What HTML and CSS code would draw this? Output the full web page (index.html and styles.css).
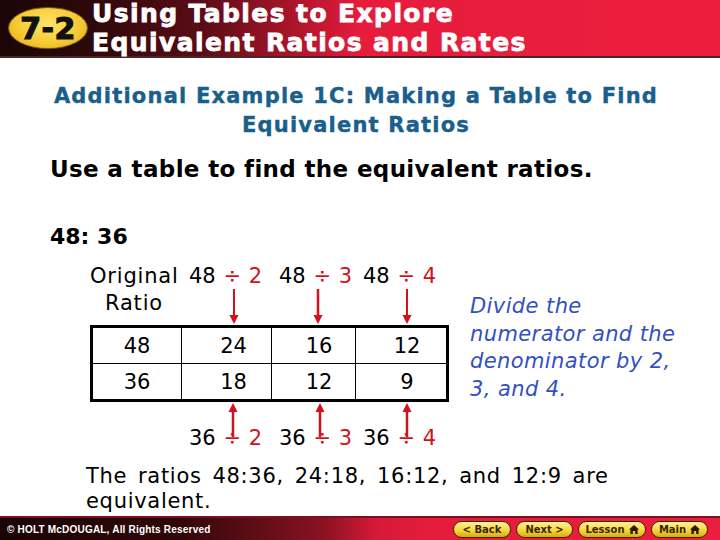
FILE: index.html
```html
<!DOCTYPE html>
<html>
<head>
<meta charset="utf-8">
<link rel="stylesheet" href="styles.css">
</head>
<body>
<div class="slide">
  <header class="header">
    <div class="badge"><span>7-2</span></div>
    <div class="title">
      <div>Using Tables to Explore</div>
      <div>Equivalent Ratios and Rates</div>
    </div>
  </header>

  <main class="content">
    <h1 class="example">Additional Example 1C: Making a Table to Find<br>Equivalent Ratios</h1>
    <p class="task">Use a table to find the equivalent ratios.</p>
    <p class="ratio">48: 36</p>

    <div class="work">
      <div class="diagram">
        <div class="toprow">
          <div class="orig">Original<br><span class="ratio-word">Ratio</span></div>
          <div class="op c2"><span class="n">48</span> <span class="r">÷ 2</span>
            <svg class="arr down" width="10" height="36" viewBox="0 0 10 36"><line x1="5" y1="0" x2="5" y2="28" stroke="#d4101c" stroke-width="2"/><path d="M0.5 26 L5 35 L9.5 26 Z" fill="#d4101c"/></svg>
          </div>
          <div class="op c3"><span class="n">48</span> <span class="r">÷ 3</span>
            <svg class="arr down" width="10" height="36" viewBox="0 0 10 36"><line x1="5" y1="0" x2="5" y2="28" stroke="#d4101c" stroke-width="2.5"/><path d="M0.5 26 L5 35 L9.5 26 Z" fill="#d4101c"/></svg>
          </div>
          <div class="op c4"><span class="n">48</span> <span class="r">÷ 4</span>
            <svg class="arr down" width="10" height="36" viewBox="0 0 10 36"><line x1="5" y1="0" x2="5" y2="28" stroke="#d4101c" stroke-width="2"/><path d="M0.5 26 L5 35 L9.5 26 Z" fill="#d4101c"/></svg>
          </div>
        </div>

        <table class="tbl">
          <tr><td>48</td><td>24</td><td>16</td><td>12</td></tr>
          <tr><td>36</td><td>18</td><td>12</td><td>9</td></tr>
        </table>

        <div class="botrow">
          <div class="orig"></div>
          <div class="op c2">
            <svg class="arr up" width="10" height="34" viewBox="0 0 10 34"><path d="M0.5 9 L5 0 L9.5 9 Z" fill="#d4101c"/><line x1="5" y1="7" x2="5" y2="34" stroke="#d4101c" stroke-width="2.5"/></svg>
            <span class="n">36</span> <span class="r">÷ 2</span></div>
          <div class="op c3">
            <svg class="arr up" width="10" height="34" viewBox="0 0 10 34"><path d="M0.5 9 L5 0 L9.5 9 Z" fill="#d4101c"/><line x1="5" y1="7" x2="5" y2="34" stroke="#d4101c" stroke-width="2.5"/></svg>
            <span class="n">36</span> <span class="r">÷ 3</span></div>
          <div class="op c4">
            <svg class="arr up" width="10" height="34" viewBox="0 0 10 34"><path d="M0.5 9 L5 0 L9.5 9 Z" fill="#d4101c"/><line x1="5" y1="7" x2="5" y2="34" stroke="#d4101c" stroke-width="2.5"/></svg>
            <span class="n">36</span> <span class="r">÷ 4</span></div>
        </div>
      </div>
      <p class="note">Divide the<br>numerator and the<br>denominator by 2,<br>3, and 4.</p>
    </div>

    <p class="conclusion">The ratios 48:36, 24:18, 16:12, and 12:9 are equivalent.</p>
  </main>

  <footer class="footer">
    <span class="copy">© HOLT McDOUGAL, All Rights Reserved</span>
    <nav class="nav">
      <span class="btn b-back">&lt; Back</span>
      <span class="btn b-next">Next &gt;</span>
      <span class="btn b-lesson">Lesson <svg class="home" width="10" height="9" viewBox="0 0 10 9"><path d="M5 0 L10 4.5 L8.6 4.5 L8.6 9 L6.2 9 L6.2 6 L3.8 6 L3.8 9 L1.4 9 L1.4 4.5 L0 4.5 Z" fill="#2a1800"/></svg></span>
      <span class="btn b-main">Main <svg class="home" width="10" height="9" viewBox="0 0 10 9"><path d="M5 0 L10 4.5 L8.6 4.5 L8.6 9 L6.2 9 L6.2 6 L3.8 6 L3.8 9 L1.4 9 L1.4 4.5 L0 4.5 Z" fill="#2a1800"/></svg></span>
    </nav>
  </footer>
</div>
</body>
</html>
```

FILE: styles.css
```css
* { box-sizing: border-box; }
html, body { margin: 0; padding: 0; background: #fff; }
.slide {
  width: 720px;
  height: 540px;
  display: flex;
  flex-direction: column;
  font-family: "DejaVu Sans", Verdana, sans-serif;
  color: #000;
  overflow: hidden;
}
.header {
  height: 58px;
  flex: none;
  display: flex;
  align-items: center;
  background: linear-gradient(90deg, #1c0505 0%, #2c0809 12%, #5a0c16 28%, #b3162c 42%, #e61c3c 50%, #ec1e3e 100%);
  border-bottom: 2px solid #4a2528;
}
.badge {
  width: 80px;
  height: 42px;
  margin-left: 8px;
  margin-right: 4px;
  border-radius: 50%;
  background: radial-gradient(ellipse at 50% 40%, #ffe46a 0%, #f5c830 60%, #d9a415 100%);
  border: 1px solid #7a5a10;
  display: flex;
  align-items: center;
  justify-content: center;
}
.badge span {
  font-family: "DejaVu Sans", Arial, sans-serif;
  font-weight: bold;
  font-size: 30px;
  color: #111;
  -webkit-text-stroke: 1.2px #111;
  letter-spacing: 0.5px;
}
.title {
  font-family: "DejaVu Sans", Arial, sans-serif;
  font-weight: bold;
  font-size: 25px;
  line-height: 29px;
  color: #fff;
  -webkit-text-stroke: 0.8px #fff;
  letter-spacing: 1.4px;
  margin-top: -1px;
  white-space: nowrap;
}
.content {
  flex: 1;
  padding: 0 0 0 50px;
}
.example {
  margin: 24px 0 0 -50px;
  width: 712px;
  text-align: center;
  font-size: 21px;
  line-height: 29px;
  letter-spacing: 1.2px;
  font-weight: bold;
  color: #1a5f8c;
  -webkit-text-stroke: 0.4px #1a5f8c;
}
.task {
  margin: 15px 0 0 0;
  font-size: 23px;
  line-height: 28px;
  letter-spacing: 0.35px;
  font-weight: bold;
}
.ratio {
  margin: 41px 0 0 0;
  font-size: 22px;
  line-height: 26px;
  font-weight: bold;
}
.work {
  display: flex;
  align-items: flex-start;
  margin-top: 13px;
  margin-left: 40px;
}
.diagram {
  width: 356px;
  flex: none;
}
.toprow, .botrow {
  display: grid;
  grid-template-columns: 90px 90px 84px 92px;
  font-size: 21px;
  line-height: 26px;
}
.toprow .orig { line-height: 27px; letter-spacing: 0.8px; white-space: nowrap; }
.ratio-word { margin-left: 15px; }
.op { padding-left: 9px; white-space: nowrap; word-spacing: 1px; }
.r { color: #d4101c; }
.arr { display: block; }
.c2 .arr { margin-left: 40px; }
.c3 .arr { margin-left: 34px; }
.c4 .arr { margin-left: 39px; }
.botrow .c2 .arr { margin-left: 39px; }
.botrow .c3 .arr { margin-left: 36px; }
.botrow .c4 .arr { margin-left: 39px; }
.botrow .arr { margin-top: 1px; margin-bottom: -12px; }
.tbl {
  width: 356px;
  border-collapse: collapse;
  border: 3px solid #000;
  font-size: 21px;
  table-layout: fixed;
}
.tbl td {
  border: 1px solid #000;
  height: 37px;
  text-align: center;
  padding: 0;
}
.tbl td:nth-child(1) { width: 90px; }
.tbl td:nth-child(2) { width: 90px; padding-left: 14px; }
.tbl td:nth-child(3) { width: 84px; padding-left: 11px; }
.tbl td:nth-child(4) { width: 92px; padding-left: 12px; }
.note {
  margin: 30px 0 0 24px;
  font-size: 21px;
  line-height: 27.5px;
  letter-spacing: 0.4px;
  font-style: italic;
  color: #3350c0;
  white-space: nowrap;
}
.conclusion {
  margin: 13px 0 0 36px;
  width: 580px;
  font-size: 21px;
  line-height: 25px;
  letter-spacing: 0.7px;
  word-spacing: 3.5px;
}
.footer {
  height: 24px;
  flex: none;
  display: flex;
  align-items: center;
  justify-content: space-between;
  background: linear-gradient(90deg, #1a0404 0%, #300809 25%, #8a1222 45%, #d41a38 52%, #e61c3c 60%, #ea1e3e 100%);
  border-top: 2px solid #7a1020;
  padding: 0 12px 0 7px;
}
.copy {
  font-family: "Liberation Sans", Arial, sans-serif;
  font-weight: bold;
  font-size: 10px;
  color: #fff;
  letter-spacing: 0.2px;
}
.nav { display: flex; gap: 5px; }
.btn {
  display: flex;
  align-items: center;
  justify-content: center;
  gap: 4px;
  height: 17px;
  border-radius: 9px;
  background: linear-gradient(180deg, #fff29a 0%, #f6d63a 55%, #d8aa12 100%);
  border: 1.5px solid #3a2200;
  font-family: "DejaVu Sans", Verdana, sans-serif;
  font-weight: bold;
  font-size: 10px;
  color: #3a2400;
}
.b-back { width: 58px; }
.b-next { width: 57px; }
.b-lesson { width: 68px; }
.b-main { width: 57px; }
```
